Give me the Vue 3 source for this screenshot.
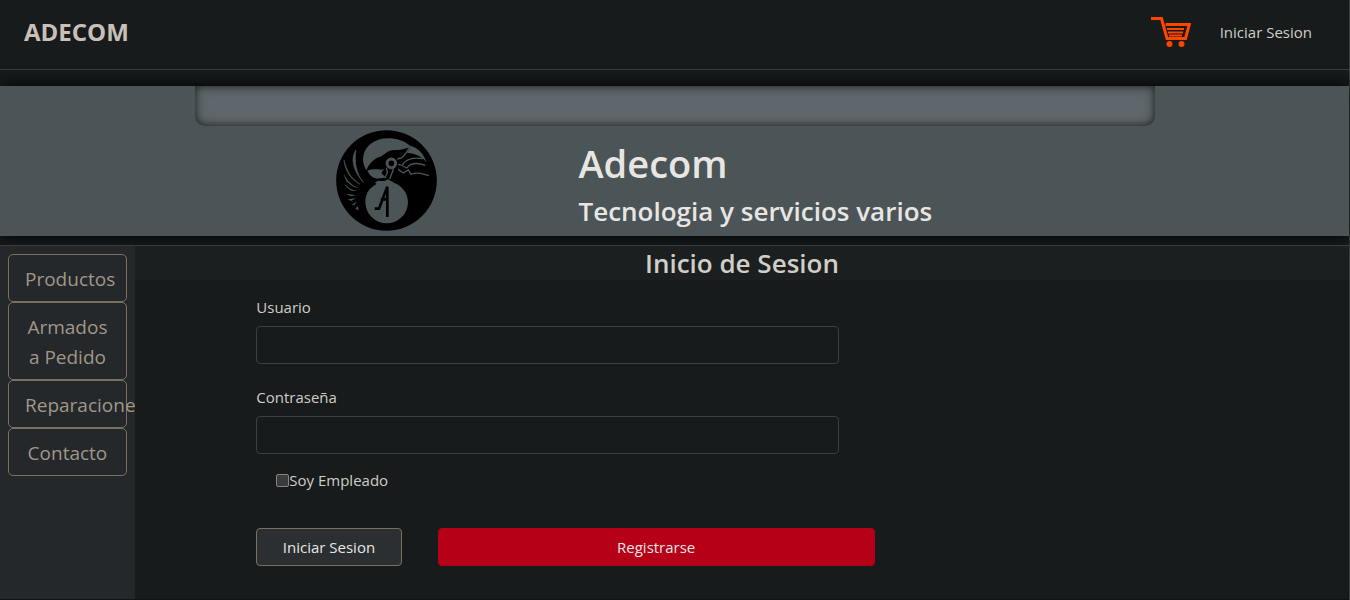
<script setup>
import { ref } from 'vue'

const sections = ['Productos', 'Armados a Pedido', 'Reparaciones', 'Contacto']
const user = ref('')
const password = ref('')
const employee = ref(false)
</script>

<template>
  <div class="page">
    <header class="topbar">
      <a class="brand" href="#">ADECOM</a>
      <nav class="account">
        <a class="cart" href="#" aria-label="Carrito">
          <svg viewBox="0 0 40 30" width="40" height="30" aria-hidden="true">
            <path d="M0 1.500H10.500L16 21.500H34.500L38.300 7.500H14.500" fill="none" stroke="#ff4500" stroke-width="3" />
            <path d="M16 12H33M17 15.500H32M18 18.500H31" fill="none" stroke="#ff4500" stroke-width="2" />
            <circle cx="18.500" cy="27" r="3" fill="#ff4500" />
            <circle cx="30.500" cy="27" r="3" fill="#ff4500" />
          </svg>
        </a>
        <a class="login-link" href="#">Iniciar Sesion</a>
      </nav>
    </header>

    <section class="banner">
      <div class="ribbon"></div>
      <div class="identity">
        <svg class="logo" viewBox="30 32 303 301" role="img" aria-label="Logo de Adecom">
          <circle cx="181.500" cy="182.500" r="151" fill="#000" />
          <g fill="#4b5456">
            <path d="M121 152C102 122 112 88 136 71C164 49 222 50 253 79C246 86 232 91 205 91C182 92 178 106 160 112C143 118 130 130 121 152Z" />
            <path d="M252 78C272 82 291 98 302 128C290 112 268 101 243 99C249 92 252 86 252 78Z" />
            <path d="M124 153C139 146 151 151 176 149C162 157 165 164 182 173C159 178 137 181 124 153Z" />
            <path d="M147 189C158 178 167 186 177 183L187 179C194 183 199 187 205 190C229 199 246 222 246 247A64 64 0 0 1 118 247C118 222 130 204 152 193Z" />
            <path d="M90 91C73 116 80 152 112 188C91 162 84 127 90 91Z" stroke="#4b5456" stroke-width="2" />
            <path d="M54 122C57 151 72 178 101 193C76 178 62 154 54 122Z" stroke="#4b5456" stroke-width="2" />
            <path d="M54 163C62 181 75 196 98 205C75 202 56 185 54 163Z" />
            <path d="M55 192C64 203 76 211 94 214C78 216 63 209 55 192Z" />
            <path d="M60 222L90 227L74 230ZM65 239L90 236L75 244ZM77 255L93 246L85 257ZM88 266L96 260L97 273Z" />
          </g>
          <circle cx="196" cy="131" r="13" fill="#000" stroke="#4b5456" stroke-width="9" />
          <g fill="none" stroke="#4b5456" stroke-width="4">
            <path d="M214 118L226 115C238 106 246 94 251 80" />
            <path d="M216 134L229 137C239 117 260 112 291 117" />
            <path d="M230 139L242 145C253 130 275 129 298 137" />
            <path d="M216 149L232 160L247 151L255 164C274 157 290 162 309 168" />
            <path d="M181 145L184 159L177 174M202 146C202 158 194 163 192 178" />
          </g>
          <path d="M146 267H159L184 201V292M164 239H188" fill="none" stroke="#000" stroke-width="8" />
        </svg>
        <div class="titles">
          <h1>Adecom</h1>
          <h2>Tecnologia y servicios varios</h2>
        </div>
      </div>
    </section>

    <div class="body">
      <aside class="sidebar">
        <button v-for="name in sections" :key="name" type="button">{{ name }}</button>
      </aside>
      <main>
        <h2 class="form-title">Inicio de Sesion</h2>
        <form @submit.prevent>
          <label for="user">Usuario</label>
          <input id="user" v-model="user" class="field" type="text" />
          <label for="password">Contraseña</label>
          <input id="password" v-model="password" class="field" type="password" />
          <div class="check">
            <input id="employee" v-model="employee" type="checkbox" />
            <label for="employee">Soy Empleado</label>
          </div>
          <div class="actions">
            <button class="submit" type="submit">Iniciar Sesion</button>
            <button class="register" type="button">Registrarse</button>
          </div>
        </form>
      </main>
    </div>
  </div>
</template>

<style>
body {
  background: #181a1b;
}
</style>

<style scoped>
* {
  box-sizing: border-box;
}

.page {
  display: flex;
  flex-direction: column;
  min-height: 100vh;
  border-right: 1px solid #363b3d;
  background: #171b1c;
  color: #d1cdc7;
  font: 15px/24px "Segoe UI", "Open Sans", "Noto Sans", sans-serif;
}

a {
  color: inherit;
  text-decoration: none;
}

h1,
h2 {
  margin: 0;
  font-weight: 600;
}

button,
input {
  font: inherit;
}

.topbar {
  display: flex;
  align-items: center;
  justify-content: space-between;
  height: 70px;
  padding: 0 37px 5px 24px;
  border-bottom: 1px solid #373c3e;
}

.brand {
  color: #c8c0b8;
  font-size: 24px;
  font-weight: 700;
}

.account {
  display: flex;
  align-items: center;
  gap: 29px;
}

.cart svg {
  display: block;
}

.banner {
  height: 150px;
  margin-top: 16px;
  background: #4b5456;
  box-shadow: 0 0 16px #000;
}

.ribbon {
  max-width: 960px;
  height: 40px;
  margin: 0 auto;
  border-radius: 0 0 10px 10px;
  background: #60676e;
  box-shadow: inset 0 0 10px #181a1b, inset 0 0 20px #5a6462;
}

.identity {
  display: grid;
  grid-template-columns: 2fr 3fr;
  max-width: 960px;
  margin: 0 auto;
  padding-top: 4px;
}

.logo {
  width: 101px;
  height: 101px;
  justify-self: center;
}

.titles {
  padding-top: 10px;
  color: #e8e6e3;
}

.titles h1 {
  font-size: 38px;
  line-height: 46px;
}

.titles h2 {
  margin-top: 8px;
  font-size: 26px;
  line-height: 34px;
}

.body {
  display: flex;
  flex: 1;
  position: relative;
  margin-top: 9px;
  border-top: 1px solid #373c3e;
  border-bottom: 1px solid #101213;
  background: #171b1c;
}

.sidebar {
  display: flex;
  flex-direction: column;
  width: 10%;
  padding: 8px;
  overflow: hidden;
  background: #24282b;
}

.sidebar button {
  padding: 9px 16px 7px;
  border: 1px solid #7b7060;
  border-radius: 5px;
  background: transparent;
  color: #a09788;
  font-size: 19px;
  line-height: 30px;
}

main {
  flex: 1;
}

.form-title {
  background: #1b1f20;
  font-size: 26px;
  line-height: 34px;
  text-align: center;
}

form {
  padding: 15px 0 32px 10%;
}

form > label {
  display: block;
  margin-bottom: 7px;
}

.field {
  display: block;
  width: 53.3%;
  height: 38px;
  margin-bottom: 21px;
  padding: 6px 12px;
  border: 1px solid #3b4042;
  border-radius: 4px;
  background: #171b1c;
  color: #d1cdc7;
}

.check {
  display: flex;
  align-items: center;
  margin: -7px 0 0 20px;
}

.check input {
  appearance: none;
  width: 13px;
  height: 13px;
  margin: 0;
  border: 1px solid #858585;
  border-radius: 2px;
  background: #3b3b3b;
}

.check input:checked {
  background: #b60018;
}

.actions {
  display: flex;
  gap: 36px;
  margin-top: 36px;
}

.actions button {
  height: 38px;
  padding: 0;
  border-radius: 4px;
  color: #e8e6e3;
}

.submit {
  width: 13.3%;
  border: 1px solid #7b7060;
  background: #2b2f31;
}

.register {
  width: 40%;
  border: 1px solid #b60018;
  background: #b60018;
}
</style>
